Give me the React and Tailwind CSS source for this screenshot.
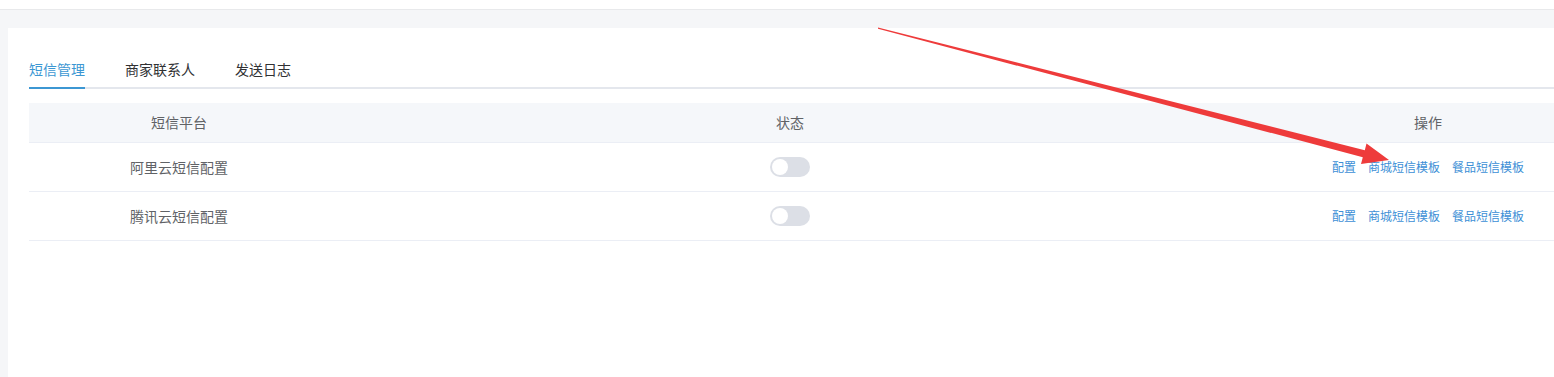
import React, { useState } from "react";

const platforms = [
  { id: 1, name: "阿里云短信配置", enabled: false },
  { id: 2, name: "腾讯云短信配置", enabled: false },
];

const tabs = ["短信管理", "商家联系人", "发送日志"];

function Switch({ checked, onChange }) {
  return (
    <button
      onClick={onChange}
      className={`relative w-[40px] h-[20px] rounded-full transition-colors ${
        checked ? "bg-[#409eff]" : "bg-[#dcdfe6]"
      }`}
    >
      <span
        className={`absolute top-[2px] w-[16px] h-[16px] rounded-full bg-white transition-all ${
          checked ? "left-[22px]" : "left-[2px]"
        }`}
      />
    </button>
  );
}

export default function App() {
  const [activeTab, setActiveTab] = useState(0);
  const [rows, setRows] = useState(platforms);

  // flip the status switch of a row
  const toggle = (id) => {
    setRows(rows.map((r) => (r.id === id ? { ...r, enabled: !r.enabled } : r)));
  };

  return (
    <div
      className="relative w-full h-[377px] overflow-hidden bg-[#f5f6f8] text-[14px]"
      style={{ fontFamily: '"Noto Sans CJK SC", "Noto Sans", sans-serif' }}
    >
      <div className="h-[10px] bg-white border-b border-[#e8e9eb]" />
      <div className="pt-[18px] pl-[8px]">
        <div className="w-[1640px] h-[360px] bg-white pl-[21px] pt-[23px]">
          {/* tabs */}
          <div className="w-[1576px] flex border-b-2 border-[#e4e7ed]">
            {tabs.map((tab, index) => (
              <div
                key={tab}
                onClick={() => setActiveTab(index)}
                className={`h-[38px] flex items-center cursor-pointer -mb-[2px] border-b-2 ${
                  index === 0 ? "mr-[20px]" : "mx-[20px]"
                } ${
                  activeTab === index
                    ? "text-[#3c97d3] border-[#3c97d3]"
                    : "text-[#303133] border-transparent"
                }`}
              >
                <span className="leading-[38px]">{tab}</span>
              </div>
            ))}
          </div>

          {/* table */}
          <div className="mt-[14px] w-[1576px] text-[#606266]">
            <div className="flex h-[40px] bg-[#f5f7fa] border-b border-[#ebeef5] items-center">
              <div className="w-[300px] text-center">短信平台</div>
              <div className="w-[922px] text-center">状态</div>
              <div className="w-[354px] text-center">操作</div>
            </div>
            {rows.map((row) => (
              <div
                key={row.id}
                className="flex h-[49px] border-b border-[#ebeef5] items-center"
              >
                <div className="w-[300px] text-center">{row.name}</div>
                <div className="w-[922px] flex justify-center">
                  <Switch checked={row.enabled} onChange={() => toggle(row.id)} />
                </div>
                <div className="w-[354px] flex justify-center gap-[12px] text-[12px] text-[#3d8fd6]">
                  <button>配置</button>
                  <button>商城短信模板</button>
                  <button>餐品短信模板</button>
                </div>
              </div>
            ))}
          </div>
        </div>
      </div>

      {/* red annotation arrow */}
      <svg
        className="absolute left-0 top-0 pointer-events-none"
        width="1554"
        height="377"
      >
        <polygon
          points="878,27.5 1364.8,150.2 1366.5,143.5 1389,160 1361,164 1362.8,157.2 878,28.8"
          fill="#ee3b3b"
        />
      </svg>
    </div>
  );
}
